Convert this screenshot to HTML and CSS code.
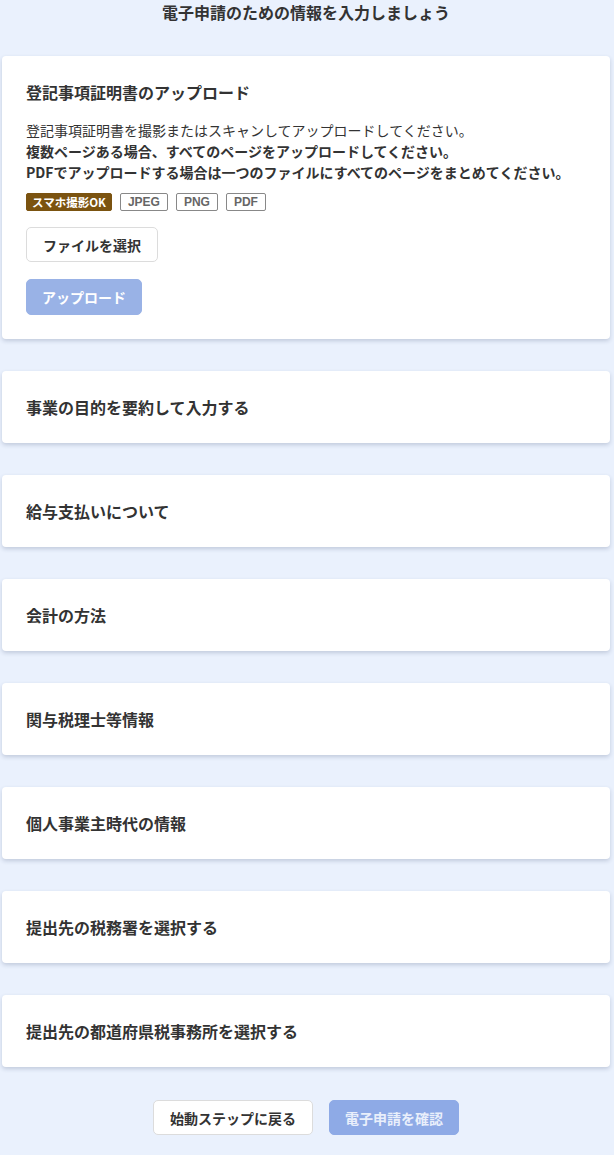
FILE: index.html
```html
<!DOCTYPE html>
<html lang="ja">
<head>
<meta charset="utf-8">
<title>電子申請</title>
<link rel="stylesheet" href="styles.css">
</head>
<body>
<div class="page">
  <h1 class="page-title">電子申請のための情報を入力しましょう</h1>
  <div class="cards">
    <section class="card card-open">
      <h2 class="card-title">登記事項証明書のアップロード</h2>
      <p class="desc">登記事項証明書を撮影またはスキャンしてアップロードしてください。</p>
      <p class="desc strong">複数ページある場合、すべてのページをアップロードしてください。</p>
      <p class="desc strong">PDFでアップロードする場合は一つのファイルにすべてのページをまとめてください。</p>
      <div class="tags">
        <span class="tag tag-brown">スマホ撮影OK</span>
        <span class="tag">JPEG</span>
        <span class="tag">PNG</span>
        <span class="tag">PDF</span>
      </div>
      <button class="btn btn-outline">ファイルを選択</button>
      <button class="btn btn-primary btn-upload">アップロード</button>
    </section>
    <section class="card"><h2 class="card-title">事業の目的を要約して入力する</h2></section>
    <section class="card"><h2 class="card-title">給与支払いについて</h2></section>
    <section class="card"><h2 class="card-title">会計の方法</h2></section>
    <section class="card"><h2 class="card-title">関与税理士等情報</h2></section>
    <section class="card"><h2 class="card-title">個人事業主時代の情報</h2></section>
    <section class="card"><h2 class="card-title">提出先の税務署を選択する</h2></section>
    <section class="card"><h2 class="card-title">提出先の都道府県税事務所を選択する</h2></section>
  </div>
  <div class="actions">
    <button class="btn btn-outline btn-action">始動ステップに戻る</button>
    <button class="btn btn-primary btn-action btn-confirm">電子申請を確認</button>
  </div>
</div>
</body>
</html>
```

FILE: styles.css
```css
* { box-sizing: border-box; }
html, body {
  margin: 0;
  padding: 0;
  background: #eaf1fd;
}
body {
  font-family: "Noto Sans CJK JP", "Noto Sans", "Liberation Sans", sans-serif;
  color: #333;
}
.page {
  padding: 0 4px 21px 2px;
}
.page-title {
  margin: 0;
  height: 24px;
  line-height: 24px;
  font-size: 16px;
  font-weight: 700;
  text-align: center;
  color: #333;
}
.cards {
  margin-top: 32px;
  display: flex;
  flex-direction: column;
  gap: 32px;
}
.card {
  background: #fff;
  border-radius: 4px;
  box-shadow: 0 2px 4px rgba(30, 50, 90, 0.2);
  padding: 24px;
}
.card-title {
  margin: 0;
  font-size: 16px;
  line-height: 24px;
  font-weight: 700;
  color: #333;
}
.card-open .card-title {
  margin-bottom: 16px;
}
.desc {
  margin: 0;
  font-size: 14px;
  line-height: 21px;
  color: #333;
}
.desc.strong {
  font-weight: 700;
}
.tags {
  display: flex;
  gap: 8px;
  margin-top: 10px;
}
.tag {
  display: inline-block;
  height: 18px;
  line-height: 16px;
  padding: 0 7px;
  font-size: 12px;
  font-weight: 700;
  color: #666;
  border: 1px solid #888;
  border-radius: 2px;
  font-family: "Liberation Sans", "Noto Sans CJK JP", sans-serif;
}
.tag-brown {
  background: #7b5310;
  border-color: #7b5310;
  color: #fff;
  padding: 0 5px;
  font-size: 11.5px;
  font-family: "Noto Sans CJK JP", sans-serif;
}
.btn {
  display: block;
  font-family: inherit;
  font-size: 14px;
  font-weight: 700;
  border-radius: 5px;
  cursor: pointer;
}
.btn-outline {
  background: #fff;
  border: 1px solid #dcdcdc;
  color: #333;
  height: 35px;
  padding: 0 16px;
  margin-top: 16px;
}
.btn-primary {
  background: #99b2e6;
  border: 1px solid #99b2e6;
  color: #fff;
  height: 36px;
  padding: 0 15px;
}
.btn-upload {
  margin-top: 17px;
}
.actions {
  display: flex;
  justify-content: center;
  gap: 16px;
  margin-top: 33px;
}
.btn-action {
  margin-top: 0;
  height: 35px;
  padding: 0 16px;
}
.actions .btn-confirm {
  background: #8eaae6;
  border-color: #8eaae6;
  color: #e9effb;
  padding: 0 15px;
}
```
